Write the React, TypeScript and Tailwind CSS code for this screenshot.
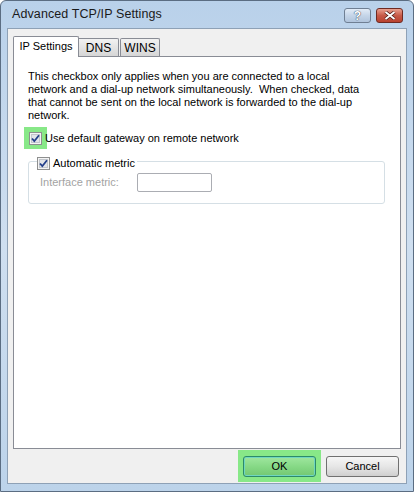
import React from "react";

const Check = () => (
  <svg viewBox="0 0 13 13" className="w-[13px] h-[13px] block">
    <rect x="0.5" y="0.5" width="12" height="12" fill="#f4f4f4" stroke="#8e8f8f" />
    <rect x="2.5" y="2.5" width="8" height="8" fill="#e2e4e8" stroke="#c2c6cc" />
    <path d="M3 6.5 L5.3 9.2 L10 3.2" fill="none" stroke="#233f8a" strokeWidth="1.8" />
  </svg>
);

export default function App() {
  const font = { fontFamily: '"Liberation Sans", Arial, sans-serif' };
  return (
    <div
      className="w-[414px] h-[492px] flex flex-col bg-gradient-to-b from-[#b9d1ea] via-[#cfdff0] to-[#bcd3ea] border border-[#5b6d82] rounded-t-[6px] text-[11px] text-black"
      style={font}
    >
      {/* title bar */}
      <div className="h-[27px] flex items-center pl-[11px] pr-[10px] shrink-0">
        <span className="text-[12.5px] text-[#1a1a1a] tracking-[0.1px]">Advanced TCP/IP Settings</span>
        <div className="ml-auto flex items-center gap-[5px] mt-[2px]">
          <div className="w-[27px] h-[15px] rounded-[3px] border border-[#6f7f93] bg-gradient-to-b from-[#e2ecf7] via-[#c5d5e8] to-[#b0c4dc] flex items-center justify-center">
            <span className="text-[12px] font-bold text-white leading-none [text-shadow:0_0_1px_#33445a,0_0_1px_#33445a]">?</span>
          </div>
          <div className="w-[27px] h-[15px] rounded-[3px] border border-[#6e2a22] bg-gradient-to-b from-[#e8a090] via-[#c75a48] to-[#b8412f] flex items-center justify-center">
            <svg viewBox="0 0 12 9" className="w-[12px] h-[9px]">
              <path d="M1.5 1 L10.5 8 M10.5 1 L1.5 8" stroke="#4a1a14" strokeWidth="3.4" />
              <path d="M1.5 1 L10.5 8 M10.5 1 L1.5 8" stroke="#ffffff" strokeWidth="2" />
            </svg>
          </div>
        </div>
      </div>

      {/* client area */}
      <div className="flex-1 mx-[6px] mb-[7px] bg-[#f0f0f0] border border-[#8ea1b6] flex flex-col">
        {/* tabs */}
        <div className="flex items-end pl-[5px] pt-[6px] h-[27px] shrink-0 relative z-10">
          <div className="w-[66px] h-[21px] bg-white border border-b-0 border-[#898c95] rounded-t-[2px] flex items-center justify-center pb-[1px] translate-y-[1px]">
            IP Settings
          </div>
          <div className="w-[40px] h-[18px] bg-gradient-to-b from-[#f2f2f2] to-[#d6d6d6] border border-b-0 border-l-0 border-[#898c95] rounded-tr-[2px] flex items-center justify-center text-[12px]">
            DNS
          </div>
          <div className="w-[40px] h-[18px] ml-[1px] bg-gradient-to-b from-[#f2f2f2] to-[#d6d6d6] border border-b-0 border-[#898c95] rounded-t-[2px] flex items-center justify-center text-[12px]">
            WINS
          </div>
        </div>

        {/* panel */}
        <div className="h-[393px] mx-[5px] bg-white border border-[#898c95] pt-[13px] pl-[14px] pr-[10px] flex flex-col">
          <p className="leading-[13px]">
            This checkbox only applies when you are connected to a local
            <br />
            network and a dial-up network simultaneously.&nbsp; When checked, data
            <br />
            that cannot be sent on the local network is forwarded to the dial-up
            <br />
            network.
          </p>

          <div className="flex items-center mt-[5px] -ml-[4px]">
            <div className="w-[23px] h-[22px] bg-[#88e888] flex items-center justify-center">
              <Check />
            </div>
            <span className="-ml-[2px]">Use default gateway on remote network</span>
          </div>

          <div className="relative mt-[12px] w-[357px] h-[43px] border border-[#d5dfe5] rounded-[3px]">
            <div className="absolute -top-[7px] left-[8px] flex items-center bg-white pr-[2px]">
              <Check />
              <span className="ml-[3px]">Automatic metric</span>
            </div>
            <div className="flex items-center pl-[11px] pt-[11px]">
              <span className="text-[#a3a3a3] w-[97px]">Interface metric:</span>
              <div className="w-[75px] h-[19px] border border-[#abadb3] rounded-[2px] bg-white" />
            </div>
          </div>
        </div>

        {/* buttons */}
        <div className="flex justify-end items-center pr-[7px] mt-[1px] gap-[5px]">
          <div className="w-[83px] h-[32px] bg-[#88e888] flex items-center justify-center">
            <div className="w-[73px] h-[21px] rounded-[3px] border border-[#2c8a6a] bg-gradient-to-b from-[#9fe79f] via-[#86d986] to-[#72c872] flex items-center justify-center shadow-[inset_0_0_0_1px_#6fd6c0]">
              OK
            </div>
          </div>
          <div className="w-[73px] h-[21px] rounded-[3px] border border-[#707070] bg-gradient-to-b from-[#f6f6f6] via-[#e6e6e6] to-[#cfcfcf] flex items-center justify-center">
            Cancel
          </div>
        </div>
      </div>
    </div>
  );
}
